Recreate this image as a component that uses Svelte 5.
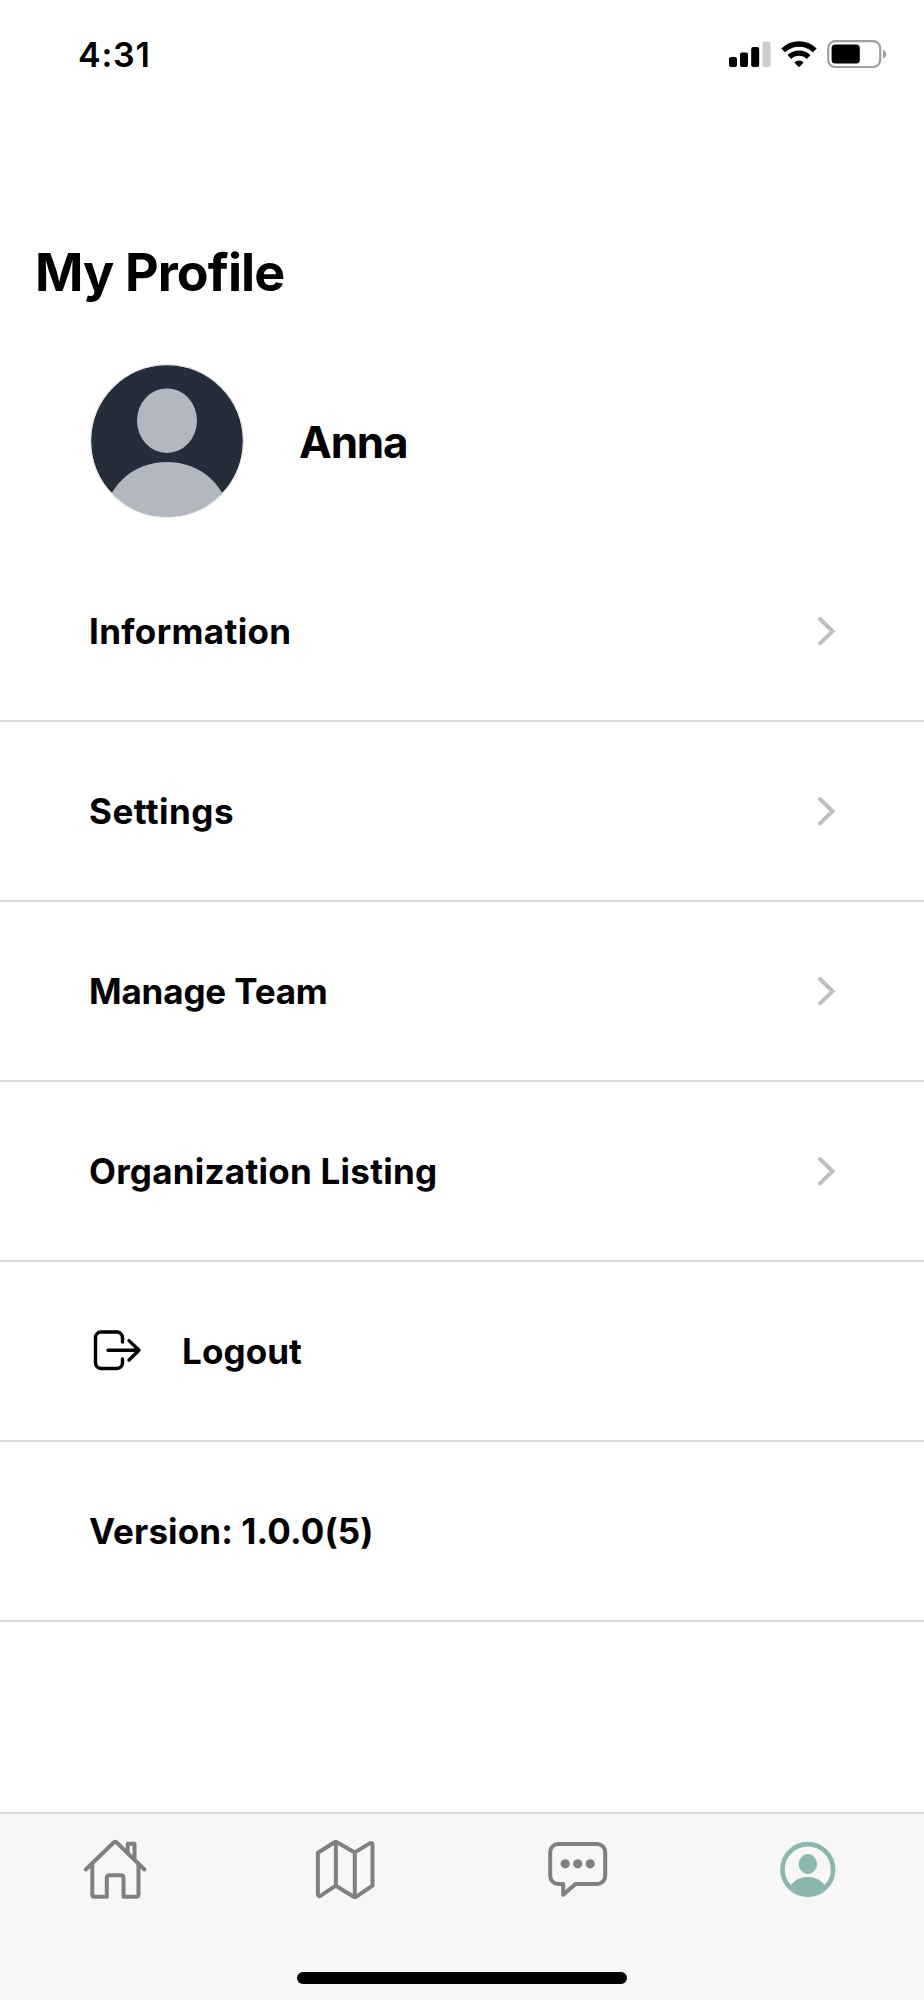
<script lang="ts">
	type Tab = 'home' | 'map' | 'chat' | 'profile';

	// tracking is the letter spacing of the label, in px
	const links = [
		{ label: 'Information', tracking: 0.35 },
		{ label: 'Settings', tracking: 0.48 },
		{ label: 'Manage Team', tracking: -0.16 },
		{ label: 'Organization Listing', tracking: 0.25 }
	];
	const tabs: Tab[] = ['home', 'map', 'chat', 'profile'];

	let active: Tab = $state('profile');
</script>

<div class="screen">
	<header class="status-bar">
		<span class="time">4:31</span>
		<div class="indicators">
			<svg class="signal" width="42" height="28" viewBox="0 0 42 28">
				<rect x="0" y="17" width="8" height="10" rx="2" />
				<rect x="11" y="12.5" width="8" height="14.5" rx="2" />
				<rect x="22.2" y="7" width="8" height="20" rx="2" />
				<rect x="33.5" y="1.5" width="8" height="25.5" rx="2" fill="#cccccc" />
			</svg>
			<svg class="wifi" width="36" height="28" viewBox="0 0 36 28">
				<path d="M2.2 10.4a22.6 22.6 0 0 1 31.6 0" />
				<path d="M8.4 17a13.8 13.8 0 0 1 19.2 0" />
				<path class="base" d="M18 27.2l-4.7-4.7a6.8 6.8 0 0 1 9.4 0z" />
			</svg>
			<svg class="battery" width="60" height="28" viewBox="0 0 60 28">
				<rect x="1.2" y="1.2" width="52" height="25.8" rx="7" fill="none" stroke="#a0a0a0" stroke-width="2.2" />
				<rect x="4.6" y="4.6" width="28.2" height="19" rx="3.5" />
				<path d="M56 10c2 .6 3.2 2 3.2 4.2S58 17.8 56 18.4z" fill="#a0a0a0" />
			</svg>
		</div>
	</header>

	<h1>My Profile</h1>

	<section class="user">
		<svg class="avatar" width="154" height="154" viewBox="0 0 154 154">
			<clipPath id="avatar-clip"><circle cx="77" cy="77" r="76" /></clipPath>
			<g clip-path="url(#avatar-clip)">
				<rect width="154" height="154" fill="#262d3a" />
				<ellipse cx="77" cy="56.7" rx="30" ry="32.3" fill="#b3b8c0" />
				<ellipse cx="77" cy="155" rx="62" ry="57" fill="#b3b8c0" />
			</g>
			<circle cx="77" cy="77" r="76.4" fill="none" stroke="#dfe1e3" stroke-width="1.2" />
		</svg>
		<h2>Anna</h2>
	</section>

	<nav class="menu">
		{#each links as link}
			<button class="row">
				<span class="label" style="letter-spacing: {link.tracking}px">{link.label}</span>
				<svg class="chevron" width="20" height="32" viewBox="0 0 20 32">
					<path d="M3 4l12.5 12.2L3 28.4" />
				</svg>
			</button>
		{/each}
		<button class="row">
			<svg class="logout" width="52" height="48" viewBox="0 0 52 48">
				<path d="M31.5 15V10.5a5.5 5.5 0 0 0-5.5-5.5h-16a5.5 5.5 0 0 0-5.5 5.5v25.5a5.5 5.5 0 0 0 5.5 5.5h16a5.5 5.5 0 0 0 5.5-5.5V32" />
				<path d="M17 23.3H48M38 13.6l10 9.7-10 9.7" />
			</svg>
			<span class="label">Logout</span>
		</button>
		<div class="row">
			<span class="label">Version: 1.0.0(5)</span>
		</div>
	</nav>

	<footer class="tab-bar">
		<div class="tabs">
			{#each tabs as tab}
				<button class="tab" class:active={active === tab} aria-label={tab} onclick={() => (active = tab)}>
					<svg width="60" height="60" viewBox="0 0 60 60">
						{#if tab === 'home'}
							<path d="M.8 29.5L28.7 2.5q1.5-1.3 3 0L59.5 29.5" />
							<path d="M7.3 24v30.2q0 2.5 2.500 2.500H21.800V38.300q0-3 3-3h10.700q3 0 3 3v18.400H51q2.500 0 2.500-2.500V24" />
							<path d="M42.7 12V3.8h6.8v15" />
						{:else if tab === 'map'}
							<path d="M1.9 12.7L17.8 2.7q2-1.3 4 0l17 9.7L53.7 3.4q2.8-1.4 2.8 1.4v40.9L40.8 56.3q-2 1.3-4 0L19.8 45.7 4.7 55.7q-2.8 1.4-2.8-1.4z" />
							<path d="M19.9 2v43.7M38.8 12.4V57" />
						{:else if tab === 'chat'}
							<path d="M11.2 4h39a8 8 0 0 1 8 8v24a8 8 0 0 1-8 8H28.5L16.2 54.7V44h-5a8 8 0 0 1-8-8V12a8 8 0 0 1 8-8z" />
							<g class="solid">
								<circle cx="18.2" cy="23.8" r="4.6" />
								<circle cx="30.7" cy="23.8" r="4.6" />
								<circle cx="43.2" cy="23.8" r="4.6" />
							</g>
						{:else}
							<clipPath id="tab-clip"><circle cx="29.8" cy="29.4" r="27" /></clipPath>
							<circle cx="29.8" cy="29.4" r="25.3" stroke-width="4.6" />
							<g class="solid">
								<ellipse cx="29.8" cy="24" rx="9.2" ry="10" />
								<ellipse cx="29.8" cy="54" rx="19.8" ry="17" clip-path="url(#tab-clip)" />
							</g>
						{/if}
					</svg>
				</button>
			{/each}
		</div>
		<div class="home-indicator"></div>
	</footer>
</div>

<style>
	:global(body) {
		margin: 0;
		background: #fff;
	}

	.screen {
		display: flex;
		flex-direction: column;
		width: 924px;
		height: 2000px;
		overflow: hidden;
		background: #fff;
		color: #000;
		font-family: Inter, 'Liberation Sans', sans-serif;
	}

	button {
		margin: 0;
		border: 0;
		background: none;
		color: inherit;
		font: inherit;
		cursor: pointer;
	}

	svg {
		display: block;
		flex: none;
		overflow: visible;
	}

	.status-bar {
		display: flex;
		justify-content: space-between;
		align-items: center;
		box-sizing: border-box;
		height: 108px;
		padding: 0 37px 0 78px;
	}

	.time {
		font-size: 34px;
		font-weight: 600;
		letter-spacing: 0.8px;
	}

	.indicators {
		display: flex;
		align-items: center;
	}

	.wifi {
		margin: 0 10px;
	}

	.wifi path {
		fill: none;
		stroke: #000;
		stroke-width: 5.4;
	}

	.wifi .base {
		fill: #000;
		stroke: none;
	}

	h1,
	h2 {
		margin: 0;
		font-weight: 700;
	}

	h1 {
		height: 64px;
		margin: 133px 0 0 35px;
		font-size: 52px;
		line-height: 64px;
		letter-spacing: -0.9px;
	}

	.user {
		display: flex;
		align-items: center;
		gap: 55px;
		height: 154px;
		margin: 59px 0 0 90px;
	}

	h2 {
		padding-top: 2px;
		font-size: 44px;
		line-height: 56px;
		letter-spacing: -1.2px;
	}

	.menu {
		display: flex;
		flex-direction: column;
		margin-top: 24px;
	}

	.row {
		display: flex;
		align-items: center;
		box-sizing: border-box;
		width: 100%;
		height: 180px;
		padding: 0 87px 0 89px;
		border-bottom: 2px solid #dadada;
		text-align: left;
	}

	.label {
		flex: 1;
		font-size: 35px;
		font-weight: 700;
		letter-spacing: 0.1px;
	}

	.chevron path {
		fill: none;
		stroke: #c0c0c0;
		stroke-width: 4;
		stroke-linecap: round;
	}

	.logout {
		margin: 0 39px 0 2px;
	}

	.logout path {
		fill: none;
		stroke: #000;
		stroke-width: 3.4;
		stroke-linecap: round;
		stroke-linejoin: round;
	}

	.tab-bar {
		display: flex;
		flex-direction: column;
		align-items: center;
		justify-content: space-between;
		box-sizing: border-box;
		height: 188px;
		margin-top: auto;
		padding: 26px 0 16px;
		border-top: 2px solid #d8d8d8;
		background: #f7f7f7;
	}

	.tabs {
		display: flex;
		box-sizing: border-box;
		width: 100%;
		padding-right: 1px;
	}

	.tab {
		display: flex;
		flex: 1;
		justify-content: center;
		padding: 0;
		color: #808080;
	}

	.tab.active {
		color: #8ab8ae;
	}

	.tab svg {
		fill: none;
		stroke: currentColor;
		stroke-width: 4;
		stroke-linecap: round;
		stroke-linejoin: round;
	}

	.tab .solid {
		fill: currentColor;
		stroke: none;
	}

	.home-indicator {
		width: 330px;
		height: 12px;
		border-radius: 6px;
		background: #000;
	}
</style>
